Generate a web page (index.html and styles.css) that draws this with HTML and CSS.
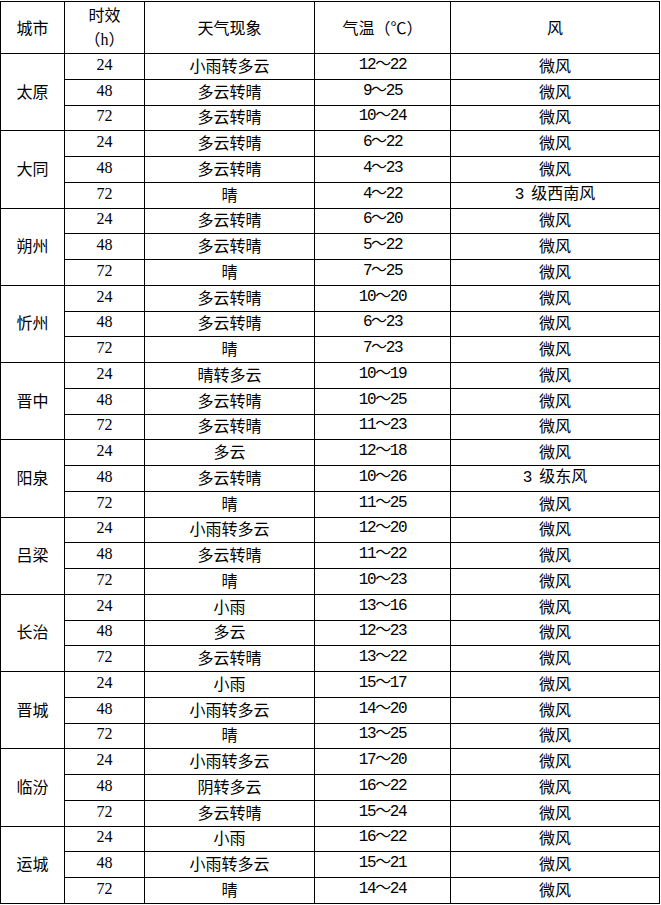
FILE: index.html
```html
<!DOCTYPE html>
<html lang="zh-CN">
<head>
<meta charset="utf-8">
<title>城市天气预报</title>
<link rel="stylesheet" href="styles.css">
</head>
<body>
<table class="fc">
<colgroup>
<col class="c-city"><col class="c-hour"><col class="c-wx"><col class="c-temp"><col class="c-wind">
</colgroup>
<thead>
<tr class="head">
<th>城市</th><th class="hour-h">时效<br>（<span class="tnr">h</span>）</th><th>天气现象</th><th>气温（℃）</th><th>风</th>
</tr>
</thead>
<tbody>
<tr><td class="city" rowspan="3">太原</td><td class="hour">24</td><td>小雨转多云</td><td class="temp">12～22</td><td class="wind">微风</td></tr>
<tr><td class="hour">48</td><td>多云转晴</td><td class="temp">9～25</td><td class="wind">微风</td></tr>
<tr><td class="hour">72</td><td>多云转晴</td><td class="temp">10～24</td><td class="wind">微风</td></tr>

<tr><td class="city" rowspan="3">大同</td><td class="hour">24</td><td>多云转晴</td><td class="temp">6～22</td><td class="wind">微风</td></tr>
<tr><td class="hour">48</td><td>多云转晴</td><td class="temp">4～23</td><td class="wind">微风</td></tr>
<tr><td class="hour">72</td><td>晴</td><td class="temp">4～22</td><td class="wind"><span class="num">3 </span>级西南风</td></tr>

<tr><td class="city" rowspan="3">朔州</td><td class="hour">24</td><td>多云转晴</td><td class="temp">6～20</td><td class="wind">微风</td></tr>
<tr><td class="hour">48</td><td>多云转晴</td><td class="temp">5～22</td><td class="wind">微风</td></tr>
<tr><td class="hour">72</td><td>晴</td><td class="temp">7～25</td><td class="wind">微风</td></tr>

<tr><td class="city" rowspan="3">忻州</td><td class="hour">24</td><td>多云转晴</td><td class="temp">10～20</td><td class="wind">微风</td></tr>
<tr><td class="hour">48</td><td>多云转晴</td><td class="temp">6～23</td><td class="wind">微风</td></tr>
<tr><td class="hour">72</td><td>晴</td><td class="temp">7～23</td><td class="wind">微风</td></tr>

<tr><td class="city" rowspan="3">晋中</td><td class="hour">24</td><td>晴转多云</td><td class="temp">10～19</td><td class="wind">微风</td></tr>
<tr><td class="hour">48</td><td>多云转晴</td><td class="temp">10～25</td><td class="wind">微风</td></tr>
<tr><td class="hour">72</td><td>多云转晴</td><td class="temp">11～23</td><td class="wind">微风</td></tr>

<tr><td class="city" rowspan="3">阳泉</td><td class="hour">24</td><td>多云</td><td class="temp">12～18</td><td class="wind">微风</td></tr>
<tr><td class="hour">48</td><td>多云转晴</td><td class="temp">10～26</td><td class="wind"><span class="num">3 </span>级东风</td></tr>
<tr><td class="hour">72</td><td>晴</td><td class="temp">11～25</td><td class="wind">微风</td></tr>

<tr><td class="city" rowspan="3">吕梁</td><td class="hour">24</td><td>小雨转多云</td><td class="temp">12～20</td><td class="wind">微风</td></tr>
<tr><td class="hour">48</td><td>多云转晴</td><td class="temp">11～22</td><td class="wind">微风</td></tr>
<tr><td class="hour">72</td><td>晴</td><td class="temp">10～23</td><td class="wind">微风</td></tr>

<tr><td class="city" rowspan="3">长治</td><td class="hour">24</td><td>小雨</td><td class="temp">13～16</td><td class="wind">微风</td></tr>
<tr><td class="hour">48</td><td>多云</td><td class="temp">12～23</td><td class="wind">微风</td></tr>
<tr><td class="hour">72</td><td>多云转晴</td><td class="temp">13～22</td><td class="wind">微风</td></tr>

<tr><td class="city" rowspan="3">晋城</td><td class="hour">24</td><td>小雨</td><td class="temp">15～17</td><td class="wind">微风</td></tr>
<tr><td class="hour">48</td><td>小雨转多云</td><td class="temp">14～20</td><td class="wind">微风</td></tr>
<tr><td class="hour">72</td><td>晴</td><td class="temp">13～25</td><td class="wind">微风</td></tr>

<tr><td class="city" rowspan="3">临汾</td><td class="hour">24</td><td>小雨转多云</td><td class="temp">17～20</td><td class="wind">微风</td></tr>
<tr><td class="hour">48</td><td>阴转多云</td><td class="temp">16～22</td><td class="wind">微风</td></tr>
<tr><td class="hour">72</td><td>多云转晴</td><td class="temp">15～24</td><td class="wind">微风</td></tr>

<tr><td class="city" rowspan="3">运城</td><td class="hour">24</td><td>小雨</td><td class="temp">16～22</td><td class="wind">微风</td></tr>
<tr><td class="hour">48</td><td>小雨转多云</td><td class="temp">15～21</td><td class="wind">微风</td></tr>
<tr><td class="hour">72</td><td>晴</td><td class="temp">14～24</td><td class="wind">微风</td></tr>
</tbody>
</table>
</body>
</html>
```

FILE: styles.css
```css
html, body {
  margin: 0;
  padding: 0;
  background: #fff;
}
body {
  padding: 1px 0 0 0;
  font-family: "Noto Sans CJK SC", "Noto Sans", sans-serif;
  font-size: 16px;
  color: #000;
}
.fc {
  border-collapse: collapse;
  table-layout: fixed;
  width: 659px;
}
.c-city { width: 64px; }
.c-hour { width: 80px; }
.c-wx { width: 170px; }
.c-temp { width: 136px; }
.c-wind { width: 209px; }
.fc th, .fc td {
  border: 1px solid #000;
  padding: 0 0 3px 0;
  text-align: center;
  vertical-align: middle;
  font-weight: normal;
  line-height: 18px;
  white-space: nowrap;
}
.head th {
  height: 50px;
  padding: 0 0 1px 0;
  line-height: 24px;
}
.fc tbody tr {
  height: 25.76px;
}
.hour, .tnr {
  font-family: "Liberation Serif", serif;
  font-size: 16px;
}
.temp, .num {
  font-family: "Liberation Mono", "Noto Sans CJK SC", monospace;
  letter-spacing: -1.4px;
}
```
